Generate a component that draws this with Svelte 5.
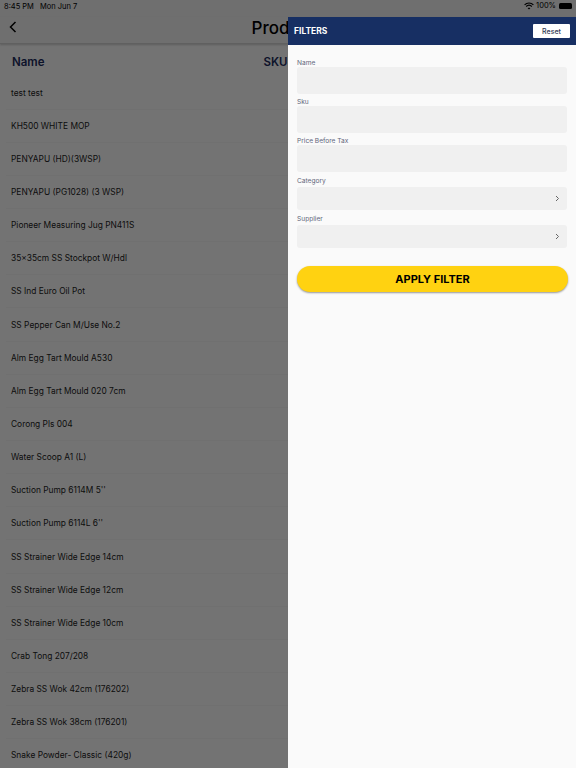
<script>
  const products = [
    'test test',
    'KH500 WHITE MOP',
    'PENYAPU (HD)(3WSP)',
    'PENYAPU (PG1028) (3 WSP)',
    'Pioneer Measuring Jug PN411S',
    '35x35cm SS Stockpot W/Hdl',
    'SS Ind Euro Oil Pot',
    'SS Pepper Can M/Use No.2',
    'Alm Egg Tart Mould A530',
    'Alm Egg Tart Mould 020 7cm',
    'Corong Pls 004',
    'Water Scoop A1 (L)',
    'Suction Pump 6114M 5\'\'',
    'Suction Pump 6114L 6\'\'',
    'SS Strainer Wide Edge 14cm',
    'SS Strainer Wide Edge 12cm',
    'SS Strainer Wide Edge 10cm',
    'Crab Tong 207/208',
    'Zebra SS Wok 42cm (176202)',
    'Zebra SS Wok 38cm (176201)',
    'Snake Powder- Classic (420g)'
  ];

  const fields = [
    { label: 'Name', tall: true },
    { label: 'Sku', tall: true },
    { label: 'Price Before Tax', tall: true },
    { label: 'Category', tall: false },
    { label: 'Supplier', tall: false }
  ];
</script>

<div class="screen">
  <div class="page">
    <div class="status">
      <span>8:45 PM</span>
      <span class="date">Mon Jun 7</span>
    </div>
    <header class="nav">
      <svg class="back" width="10" height="14" viewBox="0 0 10 14" fill="none">
        <path d="M7.5 2 L2.5 7 L7.5 12" stroke="#000" stroke-width="1.5" />
      </svg>
      <h1>Products</h1>
    </header>
    <div class="table">
      <div class="head">
        <span>Name</span>
        <span class="sku">SKU</span>
      </div>
      {#each products as name}
        <div class="row">{name}</div>
      {/each}
    </div>
  </div>

  <div class="dim"></div>

  <div class="status-right">
    <svg width="10" height="8" viewBox="0 0 10 8" fill="none" stroke="#000" stroke-width="1.2">
      <path d="M.6 2.8 C3 .4 7 .4 9.4 2.8" />
      <path d="M2.2 4.5 C3.8 3 6.2 3 7.8 4.5" />
      <path d="M5 7.6 L3.7 6.2 C4.4 5.6 5.6 5.6 6.3 6.2 Z" fill="#000" stroke="none" />
    </svg>
    <span>100%</span>
    <span class="battery"></span>
  </div>

  <aside class="panel">
    <div class="panel-head">
      <span class="title">FILTERS</span>
      <button class="reset">Reset</button>
    </div>
    <div class="form">
      {#each fields as field}
        <div class="field" class:short={!field.tall}>
          <span class="label">{field.label}</span>
          <div class="input">
            {#if !field.tall}
              <svg width="5" height="7" viewBox="0 0 5 7" fill="none">
                <path d="M1 1 L3.5 3.5 L1 6" stroke="#666" stroke-width="1" />
              </svg>
            {/if}
          </div>
        </div>
      {/each}
      <button class="apply">APPLY FILTER</button>
    </div>
  </aside>
</div>

<style>
  :global(body) {
    margin: 0;
    font-family: Inter, "Liberation Sans", sans-serif;
  }

  .screen {
    position: relative;
    width: 576px;
    height: 768px;
    overflow: hidden;
    background: #fbfbfb;
  }

  .status {
    height: 13px;
    padding: 0 0 4px 4px;
    display: flex;
    align-items: center;
    gap: 6px;
    font-size: 7.5px;
    color: #000;
    background: #f2f2f2;
  }

  .nav {
    height: 26px;
    display: flex;
    align-items: center;
    justify-content: center;
    position: relative;
    background: #f2f2f2;
    border-bottom: 1px solid #d2d2d2;
    box-shadow: 0 1px 2px rgba(0, 0, 0, 0.2);
  }

  .back {
    position: absolute;
    left: 8px;
    top: 3px;
  }

  h1 {
    margin: 0;
    font-size: 17px;
    font-weight: 500;
    color: #000;
    transform: translateY(-2px);
  }

  .table {
    margin-left: 6px;
    background: #fbfbfb;
  }

  .head {
    height: 32.5px;
    box-sizing: border-box;
    display: flex;
    align-items: center;
    padding: 4.5px 6px 1px;
    font-size: 11.5px;
    font-weight: 600;
    color: #1c2a5c;
  }

  .sku {
    margin-left: 219px;
  }

  .row {
    height: 33.15px;
    box-sizing: border-box;
    display: flex;
    align-items: center;
    padding-left: 5px;
    font-size: 8.4px;
    color: #222;
    border-bottom: 1px solid #f3f3f3;
  }

  .dim {
    position: absolute;
    inset: 0;
    background: rgba(0, 0, 0, 0.54);
  }

  .status-right {
    position: absolute;
    top: 1px;
    right: 4px;
    display: flex;
    align-items: center;
    gap: 2px;
    font-size: 7.5px;
    color: #000;
  }

  .battery {
    width: 13px;
    height: 6px;
    margin-left: 1px;
    border-radius: 1.5px;
    background: #000;
  }

  .panel {
    position: absolute;
    top: 17px;
    right: 0;
    bottom: 0;
    width: 288px;
    background: #fafafa;
  }

  .panel-head {
    height: 28px;
    display: flex;
    align-items: center;
    justify-content: space-between;
    padding: 0 6px;
    background: #172f63;
  }

  .title {
    font-size: 8.5px;
    font-weight: 700;
    color: #fff;
  }

  .reset {
    width: 37px;
    height: 14px;
    padding: 0;
    border: 0;
    border-radius: 1px;
    background: #fff;
    font: 500 7px Inter, sans-serif;
    color: #333a55;
  }

  .form {
    display: flex;
    flex-direction: column;
    padding: 13px 9px 0;
  }

  .field {
    display: flex;
    flex-direction: column;
  }

  .label {
    height: 9px;
    line-height: 10px;
    font-size: 6.6px;
    color: #62667a;
  }

  .input {
    height: 27px;
    margin-bottom: 3px;
    display: flex;
    align-items: center;
    justify-content: flex-end;
    padding-right: 7px;
    border-radius: 3px;
    background: #f0f0f0;
  }

  .short {
    margin-top: 1px;
  }

  .short .input {
    height: 23px;
    margin-top: 2px;
  }

  .apply {
    height: 26px;
    margin-top: 15px;
    margin-right: -1px;
    padding: 0;
    border: 0;
    border-radius: 13px;
    background: #ffd211;
    box-shadow: 0 1px 2px rgba(0, 0, 0, 0.4);
    font: 700 11px Inter, sans-serif;
    color: #000;
  }
</style>
